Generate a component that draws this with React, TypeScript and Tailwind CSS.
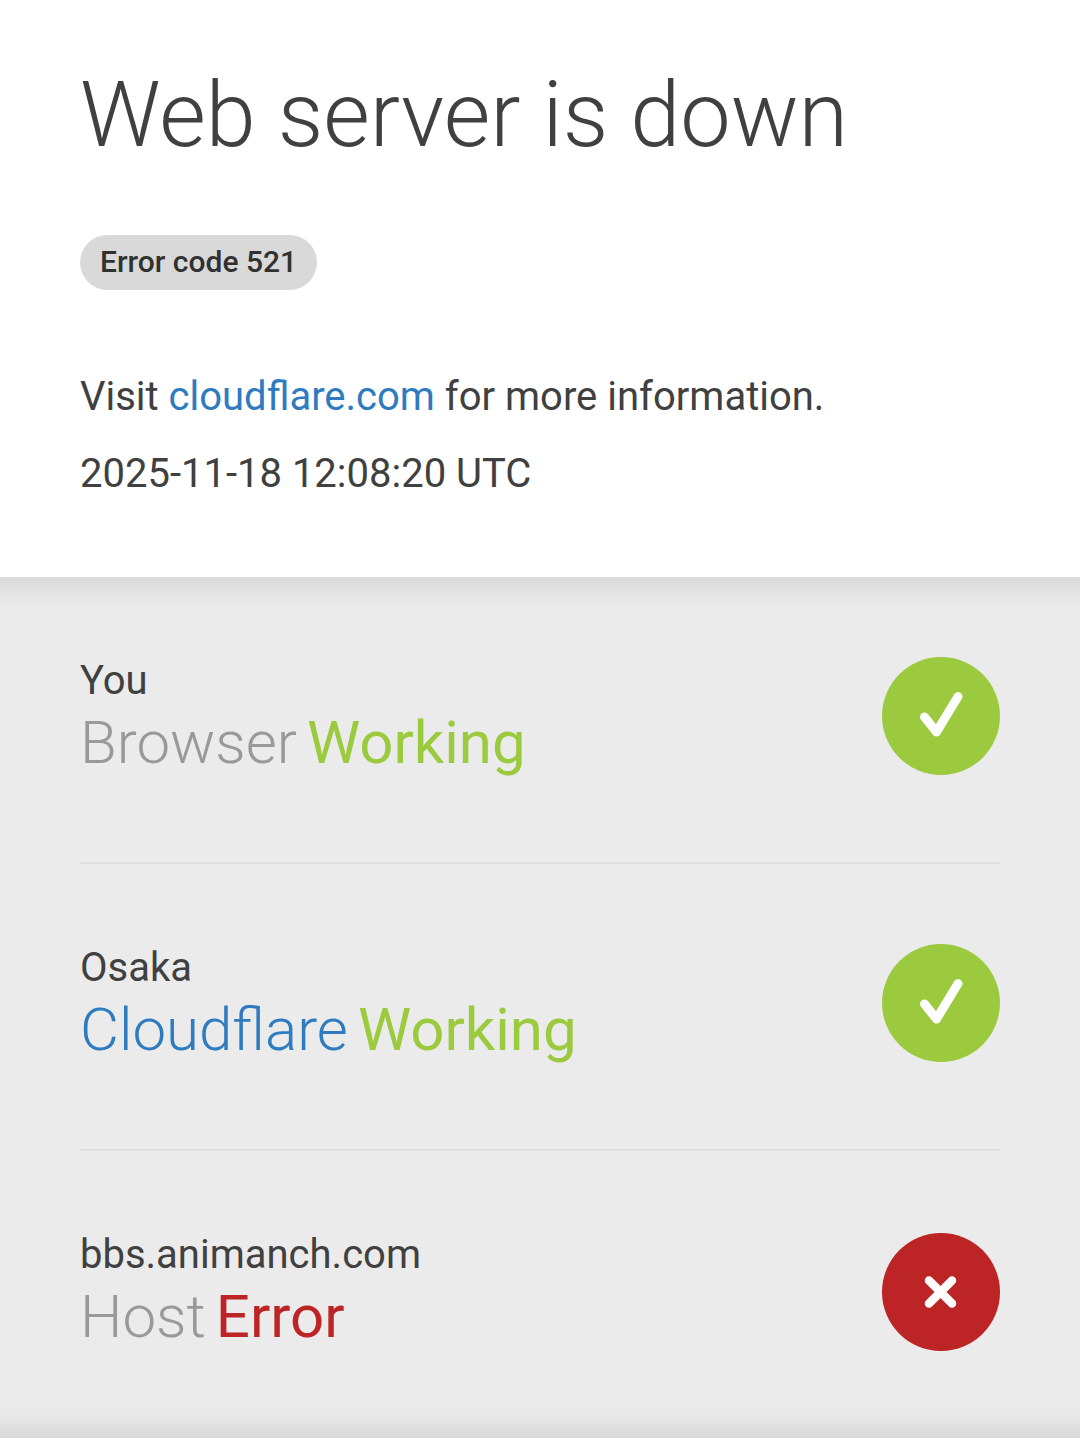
function CheckIcon() {
  return (
    <svg width="118" height="118" viewBox="0 0 118 118" fill="none">
      <path d="M42.5 60 L54.5 75 L76 39.5" stroke="#fff" strokeWidth="9" strokeLinecap="round" strokeLinejoin="round" />
    </svg>
  )
}

function CrossIcon() {
  return (
    <svg width="118" height="118" viewBox="0 0 118 118" fill="none">
      <path d="M47 47.5 L70 70.5 M70 47.5 L47 70.5" stroke="#fff" strokeWidth="8.5" strokeLinecap="round" />
    </svg>
  )
}

function StatusRow({ place, name, nameClass, status, statusClass, ok, rowClass, iconClass }: {
  place: string
  name: string
  nameClass: string
  status: string
  statusClass: string
  ok: boolean
  rowClass: string
  iconClass?: string
}) {
  return (
    <div className={`flex justify-between pt-[80px] ${rowClass}`}>
      <div>
        <div className="text-[40px] leading-[47px] text-[#404040]">{place}</div>
        <div className="text-[60px] leading-[72px] mt-[3px] font-light whitespace-nowrap">
          <span className={nameClass}>{name}</span>
          <span className={`ml-[10px] font-normal ${statusClass}`}>{status}</span>
        </div>
      </div>
      <div className={`w-[118px] h-[118px] rounded-full ${iconClass ?? ""} ${ok ? "bg-[#9bca3e]" : "bg-[#bd2426]"}`}>
        {ok ? <CheckIcon /> : <CrossIcon />}
      </div>
    </div>
  )
}

export default function App() {
  return (
    <div className="bg-white h-[1453px] font-['Roboto',sans-serif] text-[#404040] antialiased">
      <div className="h-[577px] px-[80px] pt-[62px]">
        <h1 className="text-[90px] leading-[108px] font-light">Web server is down</h1>
        <div className="mt-[65px] inline-block bg-[#d9d9d9] rounded-full px-[20px] h-[55px] leading-[54px] text-[30px] font-medium text-[#313131]">
          Error code 521
        </div>
        <p className="mt-[83px] text-[40px] leading-[47px]">
          Visit <a className="text-[#2f7bbf]">cloudflare.com</a> for more information.
        </p>
        <p className="mt-[30px] text-[40px] leading-[47px]">2025-11-18 12:08:20 UTC</p>
      </div>
      <div className="h-[861px] px-[80px] bg-[#ebebeb] shadow-[inset_0_42px_24px_-30px_rgba(0,0,0,0.09),inset_0_-42px_24px_-30px_rgba(0,0,0,0.09)]">
        <StatusRow place="You" name="Browser" nameClass="text-[#999]" status="Working" statusClass="text-[#9bca3e]" ok rowClass="h-[287px] border-b-2 border-[#dedede]" />
        <StatusRow place="Osaka" name="Cloudflare" nameClass="text-[#2f7bbf]" status="Working" statusClass="text-[#9bca3e]" ok rowClass="h-[287px] border-b-2 border-[#dedede]" />
        <StatusRow place="bbs.animanch.com" name="Host" nameClass="text-[#999]" status="Error" statusClass="text-[#bd2426]" ok={false} rowClass="h-[287px]" iconClass="mt-[2px]" />
      </div>
    </div>
  )
}
